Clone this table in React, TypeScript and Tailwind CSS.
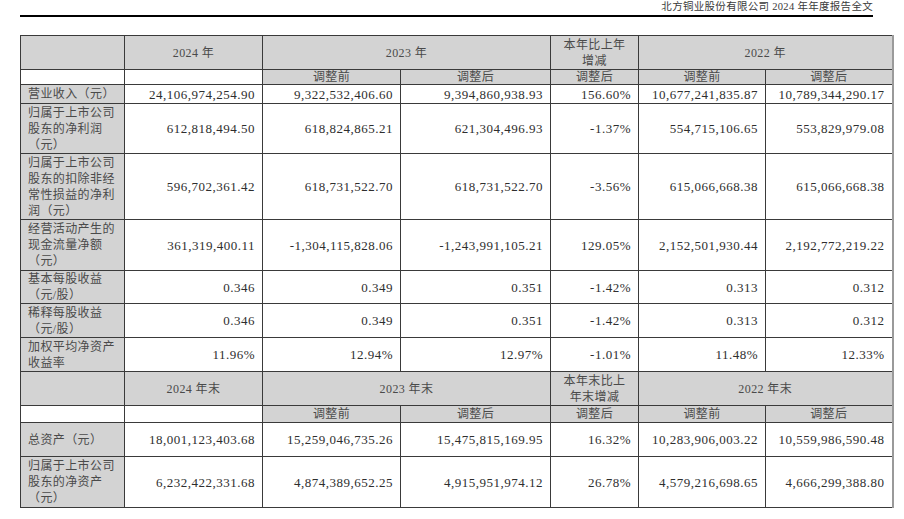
import React from 'react';

const FONT = "font-['Liberation_Serif','Noto_Sans_CJK_SC',serif]";

type Row = { label: React.ReactNode; values: string[]; h: string };

const topRows: Row[] = [
  {
    label: '营业收入（元）',
    h: 'h-[19px]',
    values: ['24,106,974,254.90', '9,322,532,406.60', '9,394,860,938.93', '156.60%', '10,677,241,835.87', '10,789,344,290.17'],
  },
  {
    label: <>归属于上市公司<br />股东的净利润<br />（元）</>,
    h: 'h-[50px]',
    values: ['612,818,494.50', '618,824,865.21', '621,304,496.93', '-1.37%', '554,715,106.65', '553,829,979.08'],
  },
  {
    label: <>归属于上市公司<br />股东的扣除非经<br />常性损益的净利<br />润（元）</>,
    h: 'h-[66px]',
    values: ['596,702,361.42', '618,731,522.70', '618,731,522.70', '-3.56%', '615,066,668.38', '615,066,668.38'],
  },
  {
    label: <>经营活动产生的<br />现金流量净额<br />（元）</>,
    h: 'h-[51px]',
    values: ['361,319,400.11', '-1,304,115,828.06', '-1,243,991,105.21', '129.05%', '2,152,501,930.44', '2,192,772,219.22'],
  },
  {
    label: <>基本每股收益<br />（元/股）</>,
    h: 'h-[33px]',
    values: ['0.346', '0.349', '0.351', '-1.42%', '0.313', '0.312'],
  },
  {
    label: <>稀释每股收益<br />（元/股）</>,
    h: 'h-[34px]',
    values: ['0.346', '0.349', '0.351', '-1.42%', '0.313', '0.312'],
  },
  {
    label: <>加权平均净资产<br />收益率</>,
    h: 'h-[34px]',
    values: ['11.96%', '12.94%', '12.97%', '-1.01%', '11.48%', '12.33%'],
  },
];

const bottomRows: Row[] = [
  {
    label: '总资产（元）',
    h: 'h-[34px]',
    values: ['18,001,123,403.68', '15,259,046,735.26', '15,475,815,169.95', '16.32%', '10,283,906,003.22', '10,559,986,590.48'],
  },
  {
    label: <>归属于上市公司<br />股东的净资产<br />（元）</>,
    h: 'h-[51px]',
    values: ['6,232,422,331.68', '4,874,389,652.25', '4,915,951,974.12', '26.78%', '4,579,216,698.65', '4,666,299,388.80'],
  },
];

const cell = 'border border-[#3a3a3a] p-0';
const grey = 'bg-[#d3d3d3]';
const cjk = 'text-[12px] tracking-[0.4px] leading-[16px] text-[#4a4a4a]';

function HeaderRows({ y24, y23, y22, change }: { y24: string; y23: string; y22: string; change: React.ReactNode }) {
  return (
    <>
      <tr className="h-[34px]">
        <td className={`${cell} ${grey}`} />
        <td className={`${cell} ${grey} ${cjk} text-center`}>{y24}</td>
        <td colSpan={2} className={`${cell} ${grey} ${cjk} text-center`}>{y23}</td>
        <td className={`${cell} ${grey} ${cjk} text-center`}>{change}</td>
        <td colSpan={2} className={`${cell} ${grey} ${cjk} text-center border-r-2 border-r-[#9a9a9a]`}>{y22}</td>
      </tr>
      <tr className={y24.includes('末') ? 'h-[17px]' : 'h-[15px]'}>
        <td className={`${cell} bg-white`} />
        <td className={`${cell} bg-white`} />
        <td className={`${cell} ${grey} ${cjk} text-center !leading-[13px]`}>调整前</td>
        <td className={`${cell} ${grey} ${cjk} text-center !leading-[13px]`}>调整后</td>
        <td className={`${cell} ${grey} ${cjk} text-center !leading-[13px]`}>调整后</td>
        <td className={`${cell} ${grey} ${cjk} text-center !leading-[13px]`}>调整前</td>
        <td className={`${cell} ${grey} ${cjk} text-center !leading-[13px] border-r-2 border-r-[#9a9a9a]`}>调整后</td>
      </tr>
    </>
  );
}

function DataRow({ row }: { row: Row }) {
  return (
    <tr className={row.h}>
      <td className={`${cell} ${grey} ${cjk} px-[7px] text-left align-middle`}>{row.label}</td>
      {row.values.map((v, i) => (
        <td
          key={i}
          className={`${cell} bg-white px-[7px] text-right align-middle text-[13px] tracking-[0.5px] leading-none text-[#2e2e2e] ${i === 5 ? 'border-r-2 border-r-[#9a9a9a]' : ''}`}
        >
          {v}
        </td>
      ))}
    </tr>
  );
}

export default function App() {
  return (
    <div className={`w-[904px] h-[519px] bg-white overflow-hidden ${FONT}`}>
      <div className="ml-[20px] mr-[31px] border-b-2 border-black pt-[1px] pb-[2px] text-right text-[10.5px] tracking-[0.3px] leading-[12px] text-[#3a3a3a]">
        北方铜业股份有限公司 2024 年年度报告全文
      </div>
      <table className="ml-[20px] mt-[18px] border-collapse table-fixed w-[872px]">
        <colgroup>
          <col className="w-[104px]" />
          <col className="w-[138px]" />
          <col className="w-[138px]" />
          <col className="w-[150px]" />
          <col className="w-[88px]" />
          <col className="w-[127px]" />
          <col className="w-[127px]" />
        </colgroup>
        <tbody>
          <HeaderRows y24="2024 年" y23="2023 年" y22="2022 年" change={<>本年比上年<br />增减</>} />
          {topRows.map((r, i) => (
            <DataRow key={i} row={r} />
          ))}
          <HeaderRows y24="2024 年末" y23="2023 年末" y22="2022 年末" change={<>本年末比上<br />年末增减</>} />
          {bottomRows.map((r, i) => (
            <DataRow key={i} row={r} />
          ))}
        </tbody>
      </table>
    </div>
  );
}
